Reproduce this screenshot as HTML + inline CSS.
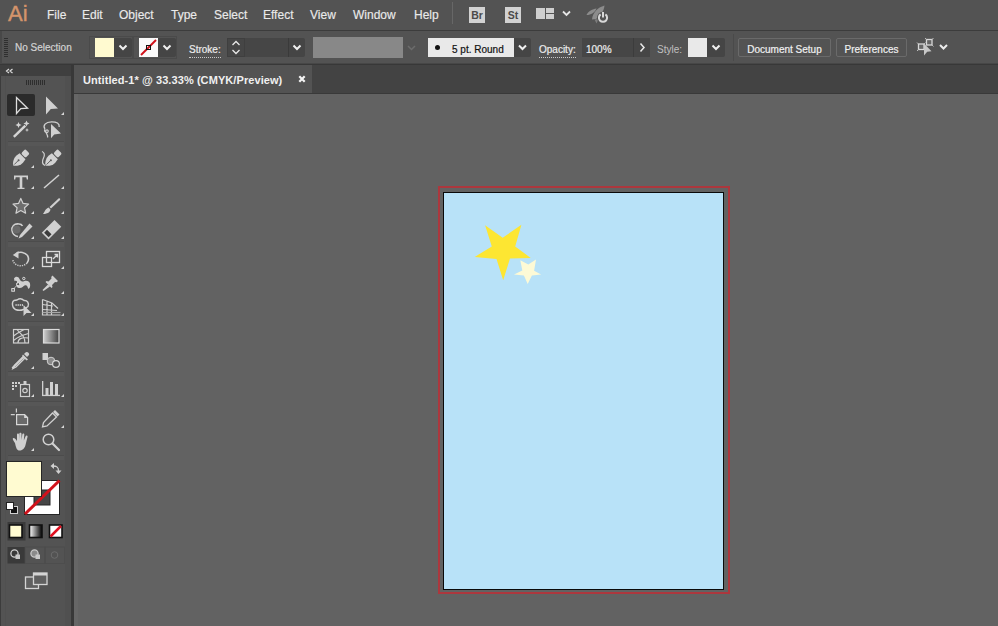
<!DOCTYPE html>
<html><head><meta charset="utf-8">
<style>
*{margin:0;padding:0;box-sizing:border-box}
html,body{width:998px;height:626px;overflow:hidden;background:#626262;font-family:"Liberation Sans",sans-serif}
.a{position:absolute}
#menubar{left:0;top:0;width:998px;height:30px;background:#535353}
#menubar .mi{position:absolute;top:8px;font-size:12px;color:#eaeaea;-webkit-text-stroke:0.15px currentColor;line-height:14px;white-space:nowrap}
#mbline{left:0;top:30px;width:998px;height:1px;background:#3c3c3c}
#ctrl{left:0;top:31px;width:998px;height:33px;background:#535353}
#ctrlline{left:0;top:63px;width:998px;height:2px;background:linear-gradient(#474747 0 1px,#383838 1px 2px)}
#tabbar{left:73px;top:65px;width:925px;height:29px;background:#434343}
#tab{left:74px;top:65px;width:238px;height:28px;background:#535353}
#canvas{left:74px;top:94px;width:924px;height:532px;background:#626262}
#panel{left:0;top:65px;width:72px;height:561px;background:#535353}
#phead{left:0;top:65px;width:72px;height:11px;background:#3e3e3e}
#pborder{left:71px;top:65px;width:3px;height:561px;background:#3a3a3a}
.lbl{position:absolute;font-size:10px;color:#ececec;white-space:nowrap;line-height:12px;-webkit-text-stroke:0.2px currentColor}

.dd{background:#454545;border-radius:0 2px 2px 0}
.ul{border-bottom:1px dotted #c8c8c8;padding-bottom:1px}
.btn{border:1px solid #6a6a6a;border-radius:2px;color:#f0f0f0;-webkit-text-stroke:0.2px currentColor;font-size:10px;line-height:21px;text-align:center;white-space:nowrap}
</style></head><body>
<div id="canvas" class="a"></div>
<div class="a" style="left:74px;top:94px;width:4px;height:532px;background:#666666"></div>
<div id="menubar" class="a">
  <div class="a" style="left:8px;top:2px;font-size:22px;color:#d4946b;line-height:24px;-webkit-text-stroke:0.4px #d4946b;letter-spacing:0.2px">Ai</div>
  <div class="mi" style="left:47px">File</div>
  <div class="mi" style="left:82px">Edit</div>
  <div class="mi" style="left:119px">Object</div>
  <div class="mi" style="left:171px">Type</div>
  <div class="mi" style="left:214px">Select</div>
  <div class="mi" style="left:263px">Effect</div>
  <div class="mi" style="left:310px">View</div>
  <div class="mi" style="left:353px">Window</div>
  <div class="mi" style="left:414px">Help</div>

  <div class="a" style="left:452px;top:2px;width:1px;height:22px;background:#676767"></div>
  <div class="a" style="left:469px;top:7px;width:16px;height:16px;background:#d2d2d2;color:#4a4a4a;font-size:10.5px;font-weight:bold;line-height:17px;text-align:center">Br</div>
  <div class="a" style="left:505px;top:7px;width:16px;height:16px;background:#d2d2d2;color:#4a4a4a;font-size:10.5px;font-weight:bold;line-height:17px;text-align:center">St</div>
  <div class="a" style="left:536px;top:8px;width:9px;height:11px;background:#cfcfcf"></div>
  <div class="a" style="left:546px;top:8px;width:8px;height:5px;background:#cfcfcf"></div>
  <div class="a" style="left:546px;top:14px;width:8px;height:5px;background:#cfcfcf"></div>
  <svg class="a" style="left:561px;top:9px" width="11" height="9"><polyline points="2,2.5 5.5,6 9,2.5" fill="none" stroke="#e6e6e6" stroke-width="1.8"/></svg>
  <svg class="a" style="left:580px;top:0px" width="32" height="30" viewBox="580 0 32 30">
    <path d="M586.5 15 C588.5 11 592.5 9 596.5 8.5 C595 12.5 591 15 586.5 15 Z" fill="#8c8c8c"/>
    <path d="M592 19.5 C592.5 13 597.5 7.5 604.5 5.5 C604 11 600.5 16 596 19 Z" fill="#8c8c8c"/>
    <path d="M594.5 19.5 L596.5 23.5 L598.5 19 Z" fill="#7c7c7c"/>
    <circle cx="603" cy="17.7" r="6" fill="#535353"/>
    <path d="M600.6 14.4 A4.1 4.1 0 1 0 605.4 14.4" fill="none" stroke="#d8d8d8" stroke-width="2"/>
    <line x1="603" y1="12" x2="603" y2="17.5" stroke="#d8d8d8" stroke-width="2"/>
  </svg>
</div>
<div id="mbline" class="a"></div>
<div id="ctrl" class="a"></div>
<div id="ctrlline" class="a"></div>
<div id="tabbar" class="a"></div>
<div id="tab" class="a"></div>
<div class="a" style="left:74px;top:93px;width:924px;height:1px;background:#393939"></div>

<div class="a" style="left:83px;top:73px;font-size:11px;font-weight:bold;color:#f0f0f0;line-height:14px;white-space:nowrap;letter-spacing:0.08px">Untitled-1* @ 33.33% (CMYK/Preview)</div>
<svg class="a" style="left:297px;top:74px" width="10" height="10"><path d="M2.3 2.3 L7.7 7.7 M7.7 2.3 L2.3 7.7" stroke="#f4f4f4" stroke-width="2.2"/></svg>
<div id="panel" class="a"></div>
<div id="phead" class="a"></div>
<div id="pborder" class="a"></div>
<svg class="a" style="left:0;top:0" width="74" height="626" viewBox="0 0 74 626">
<defs>
<linearGradient id="gr1" x1="0" x2="1" y1="0" y2="0"><stop offset="0" stop-color="#d0d0d0"/><stop offset="1" stop-color="#404040"/></linearGradient>
<linearGradient id="gr2" x1="0" x2="1" y1="0" y2="0"><stop offset="0" stop-color="#ffffff"/><stop offset="1" stop-color="#000000"/></linearGradient>
</defs>
<!-- header -->
<rect x="0" y="65" width="71" height="11" fill="#3f3f3f"/>
<path d="M9 69 L6.5 71 L9 73 M12.5 69 L10 71 L12.5 73" stroke="#dcdcdc" stroke-width="1.2" fill="none"/>
<!-- panel edges -->
<rect x="0" y="76" width="1" height="550" fill="#3c3c3c"/>
<rect x="5" y="76" width="1" height="550" fill="#505050"/>
<rect x="65" y="76" width="6" height="550" fill="#505050"/>
<rect x="71" y="65" width="3" height="561" fill="#383838"/>
<!-- grip -->
<g fill="#2e2e2e">
<rect x="26" y="80" width="1" height="5"/><rect x="28" y="80" width="1" height="5"/><rect x="30" y="80" width="1" height="5"/><rect x="32" y="80" width="1" height="5"/><rect x="34" y="80" width="1" height="5"/><rect x="36" y="80" width="1" height="5"/><rect x="38" y="80" width="1" height="5"/><rect x="40" y="80" width="1" height="5"/><rect x="42" y="80" width="1" height="5"/><rect x="44" y="80" width="1" height="5"/>
</g>
<!-- separators -->
<g fill="#575757">
<rect x="8" y="141" width="56" height="5"/>
<rect x="8" y="241" width="56" height="6"/>
<rect x="8" y="321" width="56" height="5"/>
<rect x="8" y="371" width="56" height="5"/>
<rect x="8" y="401" width="56" height="5"/>
<rect x="8" y="455" width="56" height="5"/>
</g>
<g fill="#4c4c4c">
<rect x="8" y="141" width="56" height="1"/>
<rect x="8" y="241" width="56" height="1"/>
<rect x="8" y="321" width="56" height="1"/>
<rect x="8" y="371" width="56" height="1"/>
<rect x="8" y="401" width="56" height="1"/>
<rect x="8" y="455" width="56" height="1"/>
</g>
<!-- selected tool bg -->
<rect x="7" y="94" width="28" height="22" rx="2" fill="#2b2b2b"/>
<!-- selection tool -->
<path d="M16.5 97.5 L16.5 113.5 L20.8 108.6 L27.5 108.2 Z" fill="#2b2b2b" stroke="#dedede" stroke-width="1.3" stroke-linejoin="miter"/>
<!-- direct selection -->
<path d="M46 96.5 L46 114.5 L50.8 109 L58 108.5 Z" fill="#d0d0d0"/>
<g fill="#d8d8d8" id="marks">
<path d="M64 112 L64 115 L61 115 Z"/>
</g>
<!-- magic wand -->
<g fill="#d4d4d4" stroke="none">
<path d="M13 136 L24.5 124.8 L26.2 126.5 L14.7 137.7 Z"/>
<path d="M18.5 122 l0.9 2.1 2.1 0.9 -2.1 0.9 -0.9 2.1 -0.9 -2.1 -2.1 -0.9 2.1 -0.9 Z"/>
<path d="M26.5 120.5 l0.9 2.1 2.1 0.9 -2.1 0.9 -0.9 2.1 -0.9 -2.1 -2.1 -0.9 2.1 -0.9 Z"/>
<path d="M27 128 l0.6 1.4 1.4 0.6 -1.4 0.6 -0.6 1.4 -0.6 -1.4 -1.4 -0.6 1.4 -0.6 Z"/>
</g>
<!-- lasso -->
<g>
<path d="M45 129 C42.5 125.5 45.5 122 51.5 121.8 C56.5 121.7 59.8 123.5 59.2 127" fill="none" stroke="#d0d0d0" stroke-width="1.3"/>
<path d="M45 129 C43.5 131.5 46.5 133.5 48 131.8 C49 130.2 46.5 129 45.8 130.8 C45.2 133 48.5 134.5 47.5 137.5" fill="none" stroke="#d0d0d0" stroke-width="1.2"/>
<path d="M51 124 L51 138.2 L54.2 134.5 L61 133.6 Z" fill="#d0d0d0"/>
</g>
<!-- pen -->
<g transform="translate(13.2 165.6) rotate(-45)">
<path d="M0 0 C1.5 -2.5 5 -4.8 9 -4.8 L13.2 -4.2 L13.2 4.2 L9 4.8 C5 4.8 1.5 2.5 0 0 Z" fill="#d2d2d2"/>
<rect x="14.2" y="-3.2" width="6" height="6.4" rx="1.6" fill="#d2d2d2"/>
<path d="M1.5 0 H7" stroke="#5a5a5a" stroke-width="0.9"/>
<circle cx="7.6" cy="0" r="1" fill="#5a5a5a"/>
</g>
<!-- curvature pen -->
<g transform="translate(45.5 165.6) rotate(-45)">
<path d="M0 0 C1.5 -2.5 5 -4.8 9 -4.8 L13.2 -4.2 L13.2 4.2 L9 4.8 C5 4.8 1.5 2.5 0 0 Z" fill="#d2d2d2"/>
<rect x="14.2" y="-3.2" width="6" height="6.4" rx="1.6" fill="#d2d2d2"/>
<path d="M1.5 0 H7" stroke="#5a5a5a" stroke-width="0.9"/>
<circle cx="7.6" cy="0" r="1" fill="#5a5a5a"/>
</g>
<path d="M42 151.5 C44.5 152.5 45 155 43.5 158 C42 161 42 164 45 165.5" fill="none" stroke="#d0d0d0" stroke-width="1.2"/>
<!-- type -->
<path d="M14 175.5 H28 V179.5 H26.8 L26.3 177.3 H22.3 V187.8 H24.5 V189 H17.5 V187.8 H19.7 V177.3 H15.7 L15.2 179.5 H14 Z" fill="#d0d0d0"/>
<!-- line -->
<path d="M44 188 L59 175" stroke="#d0d0d0" stroke-width="1.6"/>
<!-- star -->
<path d="M20.80 198.40 L23.09 203.44 L28.60 204.07 L24.51 207.81 L25.62 213.23 L20.80 210.50 L15.98 213.23 L17.09 207.81 L13.00 204.07 L18.51 203.44 Z" fill="#6e6e6e" stroke="#d0d0d0" stroke-width="1.2" stroke-linejoin="round"/>
<!-- paintbrush -->
<g fill="#d0d0d0">
<path d="M58.5 198.5 C60 198 60.5 199 60 200 L51 208.5 L49.5 207 Z"/>
<path d="M48.5 207.5 L50.5 209.5 C50 212.5 47 214 43 214 C44.5 212.5 45 209 48.5 207.5 Z"/>
</g>
<!-- shaper / blob -->
<g>
<path d="M19 224 C14 223 11.5 227 12 230.5 C12.5 234 15 236 18 236.5" fill="none" stroke="#d0d0d0" stroke-width="1.6"/>
<circle cx="16.5" cy="229.5" r="4" fill="#6a6a6a"/>
<path d="M19 224 C21 224 22 225 22.5 226" fill="none" stroke="#d0d0d0" stroke-width="1.6"/>
<path d="M29.5 223.5 L32.5 226.5 L22 237 L18.5 238.5 L20 235 Z" fill="#d0d0d0"/>
</g>
<!-- eraser -->
<g>
<g transform="rotate(-45 51.5 229.8)">
<rect x="42.5" y="225" width="18" height="9.6" fill="#d0d0d0"/>
<rect x="44.3" y="226.6" width="4" height="6.4" fill="#3c3c3c"/>
</g>
</g>
<!-- rotate -->
<path d="M16.5 253.5 C20 251.5 25 252 27.5 255.5 C29 258 28.5 261 27 263" fill="none" stroke="#d0d0d0" stroke-width="1.6"/>
<path d="M27 263 C24.5 266 19.5 266.5 16 264.5 C14 263.2 13 261.5 12.8 259.5" fill="none" stroke="#c8c8c8" stroke-width="1.5" stroke-dasharray="1.3 1"/>
<path d="M12.8 255 L18.5 251 L18.5 258.5 Z" fill="#d0d0d0"/>
<!-- scale -->
<g fill="none" stroke="#dadada" stroke-width="1.3">
<rect x="46.5" y="251.5" width="13" height="11"/>
<rect x="42.5" y="257.5" width="9" height="9"/>
<path d="M53 259 L57.5 254.5 M54.5 254.5 H57.5 V257.5"/>
</g>
<!-- puppet warp -->
<g>
<path d="M14 278.5 C15.5 276 18.5 276.5 19.5 279 C20.5 281 21.5 282 24 281.2 C27 280.2 30.2 281.5 30.2 285 C30.2 287.5 29.2 289 28.2 288.8 C27.6 286.5 27 284.8 25 285.2 C23 285.8 22 288.5 19 288 C16 287.5 15.5 284.5 17 282.5 C17.5 281.2 16.2 280.2 14.6 281.2 Z" fill="#d0d0d0"/>
<circle cx="18.2" cy="284.2" r="1.6" fill="#535353" stroke="#e4e4e4" stroke-width="1"/>
<path d="M16.8 285.5 L13.5 289" stroke="#c8c8c8" stroke-width="0.9"/>
<rect x="11.8" y="288.6" width="2.6" height="2.6" fill="none" stroke="#e0e0e0" stroke-width="1"/>
<circle cx="23.8" cy="278.5" r="1.2" fill="#535353" stroke="#e0e0e0" stroke-width="1"/>
</g>
<!-- pin -->
<g fill="#d0d0d0">
<path d="M52.5 275.5 L58 281 L56.5 282.3 L55 282 L52 285 L52.5 287 L51.5 288 L45.5 282 L46.5 281 L48.5 281.5 L51.5 278.5 L51.2 277 Z"/>
<path d="M48 284.5 L50 286.5 L43.5 291 L42.5 290 Z"/>
</g>
<!-- shape builder -->
<g>
<path d="M17 300 C19 298.5 22 298.5 24 300.5 C27 300 29.5 303 28 306.5 L23.5 309.5 C21 310.5 18 310.5 15.5 309.5 C12 308 11.5 302 14 300.5 Z" fill="none" stroke="#d0d0d0" stroke-width="1.4"/>
<path d="M15.5 305 H23.5" stroke="#e8e8e8" stroke-width="1.3" stroke-dasharray="1.2 0.9"/>
<path d="M23.5 305 L23.5 316 L26.5 313 L31.5 313 Z" fill="#d0d0d0"/>
</g>
<!-- perspective grid -->
<g fill="none" stroke="#d0d0d0" stroke-width="1.2">
<path d="M42.5 299.5 V315 H60.5"/>
<path d="M42.5 299.5 L52 303 L58 308.5 M42.5 304.5 L53 306 M42.5 309.5 L57 310.5 M47 300.5 V315 M51.5 302.5 V315"/>
<path d="M42.5 312.5 H60.5" stroke="#a8a8a8"/>
</g>
<!-- mesh -->
<g fill="none" stroke="#d0d0d0" stroke-width="1.2">
<rect x="13.5" y="329.5" width="15" height="13.5"/>
<path d="M13.5 336 C17 333 20 332 24 329.5 M13.5 340.5 C18 337 22 335 28.5 333.5 M18 343 C18 339 21 337 28.5 338 M17 329.5 C19 332 21 334 23 336 C24.5 338 25 340 25 343"/>
</g>
<!-- gradient -->
<rect x="43.5" y="329.5" width="15.5" height="13.5" fill="url(#gr1)" stroke="#dcdcdc" stroke-width="1.2"/>
<!-- eyedropper -->
<g>
<path d="M26.5 352 C28.5 352 29.5 353.5 29 355 L27 357 L24 354 L25.5 352.5 Z" fill="#d0d0d0"/>
<path d="M23 354.5 L28 359.5 L26.5 360.5 L22 356 Z" fill="#d0d0d0"/>
<path d="M23.5 357.5 L15 366 L13 368 L12.5 367.5 L14.5 365.5 L23 357" fill="none" stroke="#d0d0d0" stroke-width="1.3"/>
<path d="M24.5 358.5 L16 367 L13 368.5 L14.5 365.5 L23 357 Z" fill="none" stroke="#d0d0d0" stroke-width="1.3"/>
</g>
<!-- blend -->
<g>
<rect x="42.5" y="353" width="5.5" height="7" fill="#d0d0d0"/>
<circle cx="51" cy="361" r="3.8" fill="#8a8a8a" stroke="#d0d0d0" stroke-width="1"/>
<circle cx="56" cy="364" r="3.4" fill="#535353" stroke="#d8d8d8" stroke-width="1.2"/>
</g>
<!-- symbol sprayer -->
<g fill="#d0d0d0">
<rect x="12" y="382" width="2" height="2"/><rect x="15" y="382" width="2" height="2"/><rect x="18" y="382" width="2" height="2"/>
<rect x="12" y="385" width="2" height="2"/><rect x="15" y="385" width="2" height="2"/>
<rect x="12" y="388" width="2" height="2"/>
<rect x="23.5" y="381" width="3" height="3"/>
</g>
<rect x="20.5" y="384.5" width="9" height="12" fill="none" stroke="#d0d0d0" stroke-width="1.2"/>
<circle cx="25" cy="390.5" r="2.2" fill="none" stroke="#d0d0d0" stroke-width="1.2"/>
<!-- column graph -->
<g fill="#d0d0d0">
<rect x="42" y="381" width="1.3" height="15"/>
<rect x="42" y="394.8" width="18" height="1.3"/>
<rect x="45.5" y="388" width="3" height="7"/>
<rect x="50" y="382" width="3" height="13"/>
<rect x="55" y="384" width="3" height="11"/>
</g>
<!-- artboard tool -->
<g>
<path d="M10.8 414.6 H14.8 M16.4 408.6 V412.6" stroke="#d0d0d0" stroke-width="1.2"/>
<path d="M16.6 414.6 H24.6 L27.6 417.6 V424.6 H16.6 Z" fill="#6a6a6a" stroke="#d8d8d8" stroke-width="1.2"/>
<path d="M24.2 414.6 V418 H27.6 Z" fill="#d8d8d8"/>
</g>
<!-- slice/knife -->
<g>
<path d="M55 410 L59.5 414.5 L57.5 416.5 L53 412 Z" fill="#d0d0d0"/>
<path d="M52.5 413 L56.5 417 L47 426 L42.5 427 L43.5 422.5 Z" fill="none" stroke="#d0d0d0" stroke-width="1.3"/>
</g>
<!-- hand -->
<path d="M15 443 C13 440 12 438.5 13.5 438 C15 437.5 17 441 17 441 L17 434.5 C17 433 19 433 19 434.5 L19 440 L19.3 433.8 C19.3 432.3 21.5 432.3 21.5 433.8 L21.5 440 L22.3 434.5 C22.5 433 24.5 433.2 24.3 434.8 L23.8 440.5 L25.5 436.5 C26 435 28 435.5 27.5 437 L25.5 445 C24.5 449 22 450.5 19.5 450.5 C17 450.5 16 448 15 443 Z" fill="#d0d0d0"/>
<!-- zoom -->
<g>
<circle cx="48.5" cy="439.5" r="5.3" fill="none" stroke="#d0d0d0" stroke-width="1.5"/>
<path d="M52.5 443.5 L59 450" stroke="#d0d0d0" stroke-width="2.2" stroke-linecap="round"/>
</g>
<!-- sub-tool marks -->
<g fill="#d8d8d8">
<path d="M34 165 V168 H31 Z"/>
<path d="M34 186 V189 H31 Z"/><path d="M64 186 V189 H61 Z"/>
<path d="M34 211 V214 H31 Z"/><path d="M64 211 V214 H61 Z"/>
<path d="M34 236 V239 H31 Z"/><path d="M64 236 V239 H61 Z"/>
<path d="M34 266 V269 H31 Z"/><path d="M64 266 V269 H61 Z"/>
<path d="M34 291 V294 H31 Z"/><path d="M64 291 V294 H61 Z"/>
<path d="M34 313 V316 H31 Z"/><path d="M64 313 V316 H61 Z"/>
<path d="M34 366 V369 H31 Z"/>
<path d="M34 394 V397 H31 Z"/><path d="M64 394 V397 H61 Z"/>
<path d="M64 425 V428 H61 Z"/>
<path d="M34 448 V451 H31 Z"/>
</g>
<!-- fill / stroke -->
<rect x="24.5" y="480.5" width="35" height="34" fill="#ffffff" stroke="#262626" stroke-width="1"/>
<rect x="34" y="490" width="16" height="15" fill="#464646" stroke="#262626" stroke-width="1"/>
<path d="M25 514 L59.5 480.5" stroke="#d0121b" stroke-width="3"/>
<rect x="6.5" y="461.5" width="35" height="35" fill="#fffbd1" stroke="#262626" stroke-width="1"/>
<!-- swap arrow -->
<g fill="none" stroke="#d0d0d0" stroke-width="1.3">
<path d="M53 466 C57 466 58.5 467 58.5 471"/>
</g>
<path d="M50.5 466 L54 463 L54 469 Z" fill="#d0d0d0"/>
<path d="M55.5 470.5 L61.5 470.5 L58.5 474 Z" fill="#d0d0d0"/>
<!-- default fill stroke -->
<rect x="10.5" y="506.5" width="7" height="7" fill="#111" stroke="#d0d0d0" stroke-width="1"/>
<rect x="6.5" y="502.5" width="7" height="7" fill="#ffffff" stroke="#222" stroke-width="1"/>
<!-- color / gradient / none -->
<rect x="7.5" y="522" width="18" height="18.5" fill="#3a3a3a"/>
<rect x="9.5" y="525" width="12.5" height="12.5" fill="#fffbd1" stroke="#111" stroke-width="1.6"/>
<rect x="29.5" y="525" width="12.5" height="12.5" fill="url(#gr2)" stroke="#111" stroke-width="1.6"/>
<rect x="49.5" y="525" width="12.5" height="12.5" fill="#ffffff" stroke="#111" stroke-width="1.6"/>
<path d="M50.5 536.5 L61 526" stroke="#e01020" stroke-width="2.5"/>
<!-- draw modes -->
<rect x="7.5" y="547" width="17.5" height="16.5" fill="#3a3a3a"/>
<rect x="25" y="547" width="20" height="16.5" fill="none" stroke="#4c4c4c" stroke-width="0.8"/>
<rect x="45" y="547" width="19.5" height="16.5" fill="none" stroke="#4c4c4c" stroke-width="0.8"/>
<circle cx="14.5" cy="553.5" r="3.6" fill="none" stroke="#d0d0d0" stroke-width="1.3"/>
<rect x="15.5" y="554.5" width="4.5" height="4.5" fill="#c8c8c8"/>
<circle cx="34.5" cy="553.5" r="3.6" fill="#8a8a8a" stroke="#c8c8c8" stroke-width="1.3"/>
<rect x="35.5" y="554.5" width="4.5" height="4.5" fill="#c8c8c8"/>
<circle cx="54.5" cy="555" r="3.3" fill="none" stroke="#6c6c6c" stroke-width="1"/>
<!-- screen mode -->
<rect x="25.5" y="577" width="13" height="11.5" fill="#606060" stroke="#d4d4d4" stroke-width="1.3"/>
<rect x="33.5" y="573" width="13.5" height="11.5" fill="#606060" stroke="#d4d4d4" stroke-width="1.3"/>
<rect x="33.5" y="573" width="13.5" height="2.5" fill="#d4d4d4"/>
</svg>



<!-- control bar contents -->
<div class="a" style="left:0;top:31px;width:2px;height:33px;background:#484848"></div>
<div class="a" style="left:4px;top:38px;width:4px;height:20px;background:repeating-linear-gradient(#2f2f2f 0 1px,transparent 1px 2px)"></div>
<div class="lbl" style="left:15px;top:42px;font-size:10px;color:#d2d2d2">No Selection</div>
<div class="a" style="left:89px;top:36px;width:44px;height:23px;border:1px solid #4a4a4a"></div>
<div class="a" style="left:95px;top:38px;width:19px;height:19px;background:#fffad0"></div>
<div class="a dd" style="left:114px;top:38px;width:18px;height:19px"><svg width="18" height="19" style="position:absolute;left:0;top:0"><polyline points="5.5,7.5 9.0,11 12.5,7.5" fill="none" stroke="#f0f0f0" stroke-width="2"/></svg></div>
<div class="a" style="left:133px;top:36px;width:44px;height:23px;border:1px solid #4a4a4a"></div>
<div class="a" style="left:139px;top:38px;width:19px;height:19px;background:#fafafa;overflow:hidden">
  <svg width="19" height="19" style="position:absolute;left:0;top:0"><line x1="2" y1="17" x2="17" y2="2" stroke="#d0121b" stroke-width="2"/><rect x="7.5" y="7.5" width="4" height="4" fill="none" stroke="#111" stroke-width="1"/></svg>
</div>
<div class="a dd" style="left:158px;top:38px;width:18px;height:19px"><svg width="18" height="19" style="position:absolute;left:0;top:0"><polyline points="5.5,7.5 9.0,11 12.5,7.5" fill="none" stroke="#f0f0f0" stroke-width="2"/></svg></div>
<div class="lbl ul" style="left:189px;top:44px">Stroke:</div>
<div class="a" style="left:227px;top:38px;width:18px;height:19px;background:#464646;border:1px solid #3f3f3f">
  <svg width="16" height="17" style="position:absolute;left:0;top:0"><polyline points="4.5,6 8,2.5 11.5,6" fill="none" stroke="#e8e8e8" stroke-width="1.3"/><polyline points="4.5,11 8,14.5 11.5,11" fill="none" stroke="#e8e8e8" stroke-width="1.3"/></svg>
</div>
<div class="a" style="left:245px;top:38px;width:44px;height:19px;background:#464646;border-right:1px solid #3a3a3a"></div>
<div class="a dd" style="left:289px;top:38px;width:16px;height:19px"><svg width="16" height="19" style="position:absolute;left:0;top:0"><polyline points="4.5,7.5 8.0,11 11.5,7.5" fill="none" stroke="#f0f0f0" stroke-width="2"/></svg></div>
<div class="a" style="left:313px;top:37px;width:90px;height:21px;background:#888888"></div>
<div class="a" style="left:403px;top:38px;width:17px;height:19px;background:#535353">
  <svg width="17" height="19" style="position:absolute;left:0;top:0"><polyline points="5,8 8.5,11.5 12,8" fill="none" stroke="#6c6c6c" stroke-width="1.5"/></svg>
</div>
<div class="a" style="left:428px;top:38px;width:86px;height:19px;background:#e9e9e9"></div>
<div class="a" style="left:435px;top:45px;width:5px;height:5px;border-radius:50%;background:#111"></div>
<div class="lbl" style="left:452px;top:44px;color:#111">5 pt. Round</div>
<div class="a dd" style="left:514px;top:38px;width:17px;height:19px"><svg width="17" height="19" style="position:absolute;left:0;top:0"><polyline points="5.0,7.5 8.5,11 12.0,7.5" fill="none" stroke="#f0f0f0" stroke-width="2"/></svg></div>
<div class="lbl ul" style="left:539px;top:44px">Opacity:</div>
<div class="a" style="left:582px;top:38px;width:51px;height:19px;background:#464646"></div>
<div class="lbl" style="left:586px;top:44px;color:#ececec">100%</div>
<div class="a" style="left:633px;top:38px;width:17px;height:19px;background:#464646;border-left:1px solid #3c3c3c">
  <svg width="17" height="19" style="position:absolute;left:0;top:0"><polyline points="6.5,5.5 10,9.5 6.5,13.5" fill="none" stroke="#e8e8e8" stroke-width="1.5"/></svg>
</div>
<div class="lbl" style="left:657px;top:44px;color:#c0c0c0;-webkit-text-stroke:0">Style:</div>
<div class="a" style="left:688px;top:38px;width:19px;height:19px;background:#e9e9e9"></div>
<div class="a dd" style="left:707px;top:38px;width:18px;height:19px"><svg width="18" height="19" style="position:absolute;left:0;top:0"><polyline points="5.5,7.5 9.0,11 12.5,7.5" fill="none" stroke="#f0f0f0" stroke-width="2"/></svg></div>
<div class="a" style="left:733px;top:34px;width:1px;height:27px;background:#4a4a4a"></div>
<div class="a btn" style="left:738px;top:38px;width:93px;height:19px">Document Setup</div>
<div class="a btn" style="left:836px;top:38px;width:71px;height:19px">Preferences</div>
<svg class="a" style="left:908px;top:32px" width="50" height="30" viewBox="908 32 50 30">
  <rect x="918.5" y="44" width="5.5" height="5.5" fill="#666" stroke="#d8d8d8" stroke-width="1.3"/>
  <rect x="926.5" y="39.5" width="5.5" height="5.5" fill="#666" stroke="#d8d8d8" stroke-width="1.3"/>
  <path d="M917 42.5 l1.5 1.5 M925.5 42.5 l-1.5 1.5 M917 51 l1.5 -1.5 M925 38 l1.5 1.5 M933.5 38 l-1.5 1.5 M933.5 46.5 l-1.5 -1.5" stroke="#bcbcbc" stroke-width="1"/>
  <path d="M924 43.5 L924 55.5 L927.2 51.8 L931.5 51.3 Z" fill="#c8c8c8"/>
  <polyline points="940,45 943.5,48.5 947,45" fill="none" stroke="#ececec" stroke-width="2"/>
</svg>

<!-- artboard -->
<div class="a" style="left:438px;top:186px;width:292px;height:408px;border:2px solid #ac373d"></div>
<div class="a" style="left:443px;top:192px;width:281px;height:398px;border:1px solid #0a0a0a;background:#b8e2f8"></div>

<svg class="a" style="left:0;top:0" width="998" height="626">
<path d="M485.1 225.2 L502.7 237.7 L521.4 224.7 L515.2 246.5 L530.7 257.9 L510 258.4 L503.2 280.2 L496.5 258.9 L474.7 256.9 L491.8 246.5 Z" fill="#fde632"/>
<path d="M520.3 260.2 L528.3 264.4 L536 259.6 L534.1 270.8 L541.1 274.6 L531.9 275.6 L527.7 283.9 L523.9 275.6 L514 274.6 L522.3 270.5 Z" fill="#fdfad6"/>
</svg>
</body></html>
